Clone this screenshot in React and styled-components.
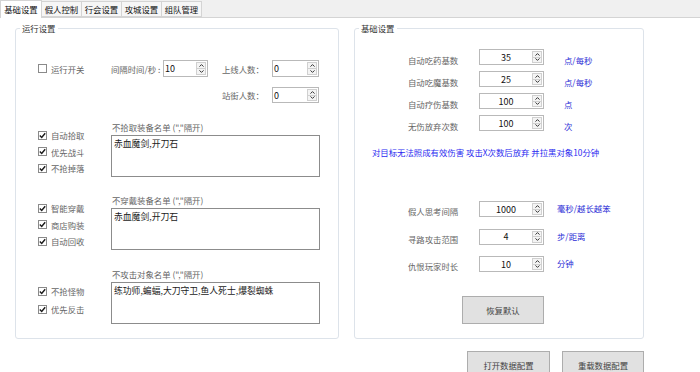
import styled, { createGlobalStyle } from "styled-components";

const GlobalStyle = createGlobalStyle`
  html, body {
    margin: 0;
    background: #ffffff;
  }
  body {
    font-family: "Noto Sans CJK SC", "Noto Sans", sans-serif;
    font-size: 8.4px;
    color: #333;
  }
`;

const tabs = ["基础设置", "假人控制", "行会设置", "攻城设置", "组队管理"];

export default function App() {
  return (
    <>
      <GlobalStyle />
      <Window>
        <TabStrip>
          {tabs.map((t, i) => (
            <Tab key={t} $active={i === 0}>
              {t}
            </Tab>
          ))}
        </TabStrip>
        <Page>
          <Boxes>
            <GroupBox $width={324}>
              <Legend>运行设置</Legend>
              <LeftInner>
                <TopRow>
                  <CheckCell>
                    <Check label="运行开关" />
                  </CheckCell>
                  <FieldLabel $width={52}>间隔时间/秒 :</FieldLabel>
                  <Spin value="10" width={45} height={17} align="left" />
                  <FieldLabel $width={50} $indent={14}>
                    上线人数：
                  </FieldLabel>
                  <Spin value="0" width={47} height={17} align="left" />
                </TopRow>
                <TopRow $second>
                  <FieldLabel $width={50} $indent={185}>
                    站街人数：
                  </FieldLabel>
                  <Spin value="0" width={47} height={16} align="left" />
                </TopRow>

                <Section $top={18}>
                  <CheckColumn $pad={6} $step={16.5}>
                    <Check checked label="自动拾取" />
                    <Check checked label="优先战斗" />
                    <Check checked label="不抢掉落" />
                  </CheckColumn>
                  <ListField>
                    <ListLabel>不拾取装备名单 (","隔开)</ListLabel>
                    <TextBox>赤血魔剑,开刀石</TextBox>
                  </ListField>
                </Section>

                <Section $top={17}>
                  <CheckColumn $pad={6} $step={16.5}>
                    <Check checked label="智能穿戴" />
                    <Check checked label="商店购装" />
                    <Check checked label="自动回收" />
                  </CheckColumn>
                  <ListField>
                    <ListLabel>不穿戴装备名单 (","隔开)</ListLabel>
                    <TextBox>赤血魔剑,开刀石</TextBox>
                  </ListField>
                </Section>

                <Section $top={18}>
                  <CheckColumn $pad={14} $step={18}>
                    <Check checked label="不抢怪物" />
                    <Check checked label="优先反击" />
                  </CheckColumn>
                  <ListField>
                    <ListLabel>不攻击对象名单 (","隔开)</ListLabel>
                    <TextBox>练功师,蝙蝠,大刀守卫,鱼人死士,爆裂蜘蛛</TextBox>
                  </ListField>
                </Section>
              </LeftInner>
            </GroupBox>

            <GroupBox $width={290}>
              <Legend>基础设置</Legend>
              <RightInner>
                <ParamList $gap={6}>
                  <ParamRow label="自动吃药基数" value="35" unit="点/每秒" unitGap={20} labelDrop={5} unitDrop={5} />
                  <ParamRow label="自动吃魔基数" value="25" unit="点/每秒" unitGap={20} labelDrop={5} unitDrop={5} />
                  <ParamRow label="自动疗伤基数" value="100" unit="点" unitGap={20} labelDrop={5} unitDrop={5} />
                  <ParamRow label="无伤放弃次数" value="100" unit="次" unitGap={20} labelDrop={5} unitDrop={5} />
                </ParamList>
                <Note>对目标无法照成有效伤害 攻击X次数后放弃 并拉黑对象10分钟</Note>
                <ParamList $gap={11.5} $top={43}>
                  <ParamRow label="假人思考间隔" value="1000" unit="毫秒/越长越笨" unitGap={13} labelDrop={4} unitDrop={1} />
                  <ParamRow label="寻路攻击范围" value="4" unit="步/距离" unitGap={13} labelDrop={4} unitDrop={1} />
                  <ParamRow label="仇恨玩家时长" value="10" unit="分钟" unitGap={13} labelDrop={4} unitDrop={1} />
                </ParamList>
                <ResetRow>
                  <Button $width={82}>恢复默认</Button>
                </ResetRow>
              </RightInner>
            </GroupBox>
          </Boxes>
          <BottomBar>
            <Button $width={83}>打开数据配置</Button>
            <Button $width={82}>重载数据配置</Button>
          </BottomBar>
        </Page>
      </Window>
    </>
  );
}

function Check({ checked, label }) {
  return (
    <CheckItem>
      <CheckBox>
        {checked && (
          <svg width="7" height="7" viewBox="0 0 7 7">
            <path d="M0.8 3.6 L2.7 5.5 L6.2 1.2" fill="none" stroke="#1a1a1a" strokeWidth="1.4" />
          </svg>
        )}
      </CheckBox>
      <CheckText>{label}</CheckText>
    </CheckItem>
  );
}

function Spin({ value, width, height, align }) {
  return (
    <SpinBox $width={width} $height={height}>
      <SpinValue $align={align}>{value}</SpinValue>
      <SpinButtons>
        <SpinButton>
          <svg width="5" height="3" viewBox="0 0 5 3">
            <path d="M0.5 2.6 L2.5 0.6 L4.5 2.6" fill="none" stroke="#333" strokeWidth="1" />
          </svg>
        </SpinButton>
        <SpinButton>
          <svg width="5" height="3" viewBox="0 0 5 3">
            <path d="M0.5 0.4 L2.5 2.4 L4.5 0.4" fill="none" stroke="#333" strokeWidth="1" />
          </svg>
        </SpinButton>
      </SpinButtons>
    </SpinBox>
  );
}

function ParamRow({ label, value, unit, unitGap, labelDrop, unitDrop }) {
  return (
    <Param>
      <ParamLabel $drop={labelDrop}>{label}</ParamLabel>
      <Spin value={value} width={65} height={16} align="center" />
      <Unit $gap={unitGap} $drop={unitDrop}>
        {unit}
      </Unit>
    </Param>
  );
}

const Window = styled.div`
  width: 700px;
  height: 372px;
  overflow: hidden;
  background: #ffffff;
`;

const TabStrip = styled.div`
  display: flex;
  align-items: flex-end;
  height: 18px;
  background: #f0f0f0;
  border-bottom: 1px solid #d4d4d4;
  box-sizing: border-box;
`;

const Tab = styled.div`
  box-sizing: border-box;
  width: ${({ $active }) => ($active ? "42px" : "41px")};
  height: ${({ $active }) => ($active ? "18px" : "16px")};
  margin-bottom: ${({ $active }) => ($active ? "-1px" : "0")};
  display: flex;
  align-items: center;
  justify-content: center;
  background: ${({ $active }) => ($active ? "#ffffff" : "#f6f6f6")};
  border: 1px solid #d4d4d4;
  border-bottom: ${({ $active }) => ($active ? "none" : "1px solid #d4d4d4")};
  margin-right: -1px;
  color: #111;
  font-size: 8.4px;
  line-height: 1;
`;

const Page = styled.div`
  padding: 10px 0 0 15px;
`;

const Boxes = styled.div`
  display: flex;
  gap: 15px;
`;

const GroupBox = styled.div`
  position: relative;
  box-sizing: border-box;
  width: ${({ $width }) => $width}px;
  height: 311px;
  border: 1px solid #dde3ea;
  border-radius: 3px;
`;

const Legend = styled.span`
  position: absolute;
  top: -7px;
  left: 4px;
  padding: 0 2px;
  background: #ffffff;
  color: #333;
  font-size: 8.4px;
  line-height: 12px;
`;

const LeftInner = styled.div`
  padding: 31px 0 0 21px;
`;

const TopRow = styled.div`
  display: flex;
  align-items: center;
  margin-top: ${({ $second }) => ($second ? "10px" : "0")};
`;

const CheckCell = styled.div`
  width: 74px;
`;

const FieldLabel = styled.span`
  width: ${({ $width }) => $width}px;
  margin-left: ${({ $indent = 0 }) => $indent}px;
  color: #666;
  white-space: nowrap;
  line-height: 12px;
`;

const Section = styled.div`
  display: flex;
  margin-top: ${({ $top }) => $top}px;
`;

const CheckColumn = styled.div`
  width: 74px;
  padding-top: ${({ $pad }) => $pad}px;
  display: grid;
  grid-auto-rows: ${({ $step }) => $step}px;
  align-content: start;
`;

const CheckItem = styled.div`
  display: flex;
  align-items: center;
  gap: 4px;
`;

const CheckBox = styled.span`
  box-sizing: border-box;
  width: 9px;
  height: 9px;
  margin-left: 1px;
  border: 1px solid #8a8a8a;
  background: #ffffff;
  display: flex;
  align-items: center;
  justify-content: center;
`;

const CheckText = styled.span`
  color: #666;
  line-height: 12px;
`;

const ListField = styled.div`
  display: flex;
  flex-direction: column;
`;

const ListLabel = styled.span`
  color: #666;
  line-height: 12px;
  margin-bottom: 2px;
  padding-left: 1px;
`;

const TextBox = styled.div`
  box-sizing: border-box;
  width: 209px;
  height: 42px;
  border: 1px solid #8c8c8c;
  padding: 2px 2px;
  color: #1a1a1a;
  font-size: 8.8px;
  line-height: 12px;
`;

const SpinBox = styled.div`
  box-sizing: border-box;
  flex: none;
  width: ${({ $width }) => $width}px;
  height: ${({ $height }) => $height}px;
  border: 1px solid #b9b9b9;
  display: flex;
  align-items: stretch;
  background: #ffffff;
`;

const SpinValue = styled.span`
  flex: 1;
  display: flex;
  align-items: center;
  justify-content: ${({ $align }) => ($align === "center" ? "center" : "flex-start")};
  padding-left: ${({ $align }) => ($align === "center" ? "0" : "1px")};
  color: #111;
  font-size: 9px;
`;

const SpinButtons = styled.div`
  width: 10px;
  display: flex;
  flex-direction: column;
  padding: 1px 1px 1px 0;
`;

const SpinButton = styled.span`
  flex: 1;
  display: flex;
  align-items: center;
  justify-content: center;
  border: 1px solid #d0d0d0;
  background: #f4f4f4;
  & + & {
    border-top: none;
  }
`;

const RightInner = styled.div`
  padding: 20px 0 0 0;
`;

const ParamList = styled.div`
  display: flex;
  flex-direction: column;
  gap: ${({ $gap }) => $gap}px;
  margin-top: ${({ $top = 0 }) => $top}px;
`;

const Param = styled.div`
  display: flex;
  align-items: flex-start;
  height: 16px;
  padding-left: 53px;
`;

const ParamLabel = styled.span`
  width: 71px;
  flex: none;
  margin-top: ${({ $drop }) => $drop}px;
  color: #666;
  line-height: 12px;
  white-space: nowrap;
`;

const Unit = styled.span`
  margin-left: ${({ $gap }) => $gap}px;
  margin-top: ${({ $drop }) => $drop}px;
  color: #2b2bd6;
  line-height: 12px;
  white-space: nowrap;
`;

const Note = styled.div`
  margin-top: 15px;
  padding-left: 17px;
  color: #2b2bf0;
  line-height: 12px;
  white-space: nowrap;
`;

const ResetRow = styled.div`
  display: flex;
  padding-left: 107px;
  margin-top: 24px;
`;

const Button = styled.div`
  box-sizing: border-box;
  width: ${({ $width }) => $width}px;
  height: 28px;
  display: flex;
  align-items: center;
  justify-content: center;
  background: #e1e1e1;
  border: 1px solid #adadad;
  color: #444;
  font-size: 8.4px;
`;

const BottomBar = styled.div`
  display: flex;
  gap: 12px;
  margin: 12px 0 0 452px;
`;
